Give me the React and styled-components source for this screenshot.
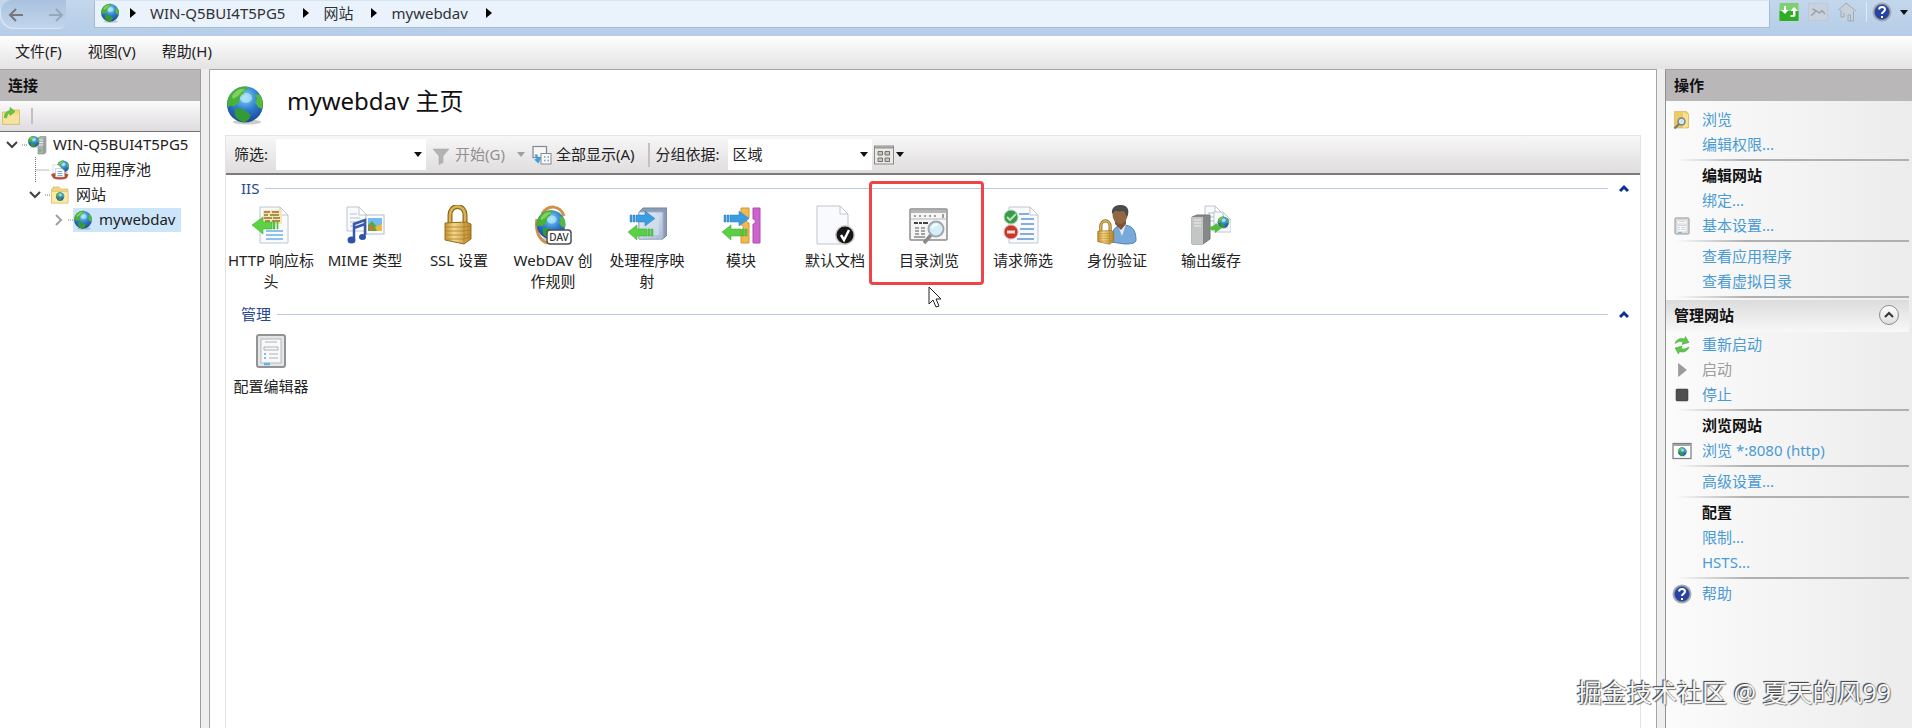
import { Fragment } from "react";
import styled, { createGlobalStyle } from "styled-components";

const connections = [
  { label: "WIN-Q5BUI4T5PG5", level: 0, state: "open", icon: "server" },
  { label: "应用程序池", level: 1, state: "leaf", icon: "pool" },
  { label: "网站", level: 1, state: "open", icon: "sites" },
  { label: "mywebdav", level: 2, state: "closed", icon: "globe", selected: true },
];

const groups = [
  {
    title: "IIS",
    features: [
      { label: "HTTP 响应标头", icon: "headers" },
      { label: "MIME 类型", icon: "mime" },
      { label: "SSL 设置", icon: "lock" },
      { label: "WebDAV 创作规则", icon: "webdav" },
      { label: "处理程序映射", icon: "handlers" },
      { label: "模块", icon: "modules" },
      { label: "默认文档", icon: "defaultDoc" },
      { label: "目录浏览", icon: "directory", marked: true },
      { label: "请求筛选", icon: "filtering" },
      { label: "身份验证", icon: "auth" },
      { label: "输出缓存", icon: "cache" },
    ],
  },
  { title: "管理", features: [{ label: "配置编辑器", icon: "config" }] },
];

const siteActions = [
  [
    { label: "浏览", icon: "explore" },
    { label: "编辑权限..." },
  ],
  [
    { label: "编辑网站", heading: true },
    { label: "绑定..." },
    { label: "基本设置...", icon: "config" },
  ],
  [{ label: "查看应用程序" }, { label: "查看虚拟目录" }],
];

const manageActions = [
  [
    { label: "重新启动", icon: "restart" },
    { label: "启动", icon: "play", disabled: true },
    { label: "停止", icon: "stop" },
  ],
  [
    { label: "浏览网站", heading: true },
    { label: "浏览 *:8080 (http)", icon: "browseSite" },
  ],
  [{ label: "高级设置..." }],
  [
    { label: "配置", heading: true },
    { label: "限制..." },
    { label: "HSTS..." },
  ],
  [{ label: "帮助", icon: "help" }],
];

const Globe = () => (
  <>
    <ellipse cx="22" cy="37" rx="14" ry="2.500" fill="#9a9a9a" opacity="0.5" />
    <circle cx="20" cy="19.500" r="18" fill="url(#ocean)" />
    <path
      d="M3 14C6 6 12 2 20 1.500c3 0 4 1 2 3l-4 2 2 3-5 3-1 5-5 4-4-1-2 2c-1-3-1-6 0-8.500Z"
      fill="#49b03a"
    />
    <path d="M30 9l5 1c3 4 3.500 9 2 14l-4-2-3-5 2-3-2-5Z" fill="#56b83c" />
    <path d="M10 24l5-1 7 4 4 3-2 4-4 3.500c-5-1-9-4-10-7Z" fill="#369a34" />
    <path d="M7 11c3-5 8-8 13-7l-3 3-4 4-5 3Z" fill="#9be070" opacity="0.7" />
    <ellipse cx="21" cy="13" rx="6" ry="5" fill="#c6f1ff" opacity="0.6" />
  </>
);

const Page = ({ x = 9, y = 2, w = 28, h = 36 }) => (
  <path
    d={`M${x} ${y}h${w - 8}l8 8v${h - 8}h-${w}Zm${w - 8} 0v8h8`}
    fill="#f8fafd"
    stroke="#bfc5cf"
  />
);

const Padlock = () => (
  <>
    <path
      d="M11 20V10a7 8 0 0 1 15 0v10"
      fill="none"
      stroke="#8f6a1c"
      strokeWidth="5"
    />
    <path
      d="M11 20V10a7 8 0 0 1 15 0v10"
      fill="none"
      stroke="#dcb257"
      strokeWidth="2.500"
    />
    <path
      d="M6 18l21-1 5 2v15l-7 5-19-4Z"
      fill="url(#brass)"
      stroke="#966c1d"
    />
    <path
      d="M7 22h18l6-1M7 26h18l6-1M7 30h18l6-1M8 34h17l6-2M25 18v20"
      fill="none"
      stroke="#a67822"
      opacity="0.7"
    />
  </>
);

const ArrowRight = () => (
  <path
    d="M3 10h2v7H3Zm3 0h2v7H6Zm3 0h9V6l10 7.500-10 7.500v-4H9Z"
    fill="#3b9de0"
    stroke="#2b7fc0"
    strokeWidth="0.500"
  />
);

const ArrowLeft = () => (
  <path
    d="M1 27l9-7v4h10v7H10v4Zm20-3h2v7h-2Zm3 0h2v7h-2Z"
    fill="#5cd045"
    stroke="#37a42c"
    strokeWidth="0.500"
  />
);

const drawings = {
  globe: <Globe />,
  server: (
    <>
      <path d="M22 6l4-3h12v32l-4 3H22Z" fill="#a9b1ae" stroke="#727b79" />
      <path d="M23 10h10M23 15h10M23 20h10" stroke="#eef2f1" strokeWidth="2" />
      <path d="M34 7v30" stroke="#666" />
      <rect x="24" y="29" width="5" height="4" fill="#58bd59" />
      <g transform="translate(1 1) scale(0.620)">
        <Globe />
      </g>
    </>
  ),
  pool: (
    <>
      <g transform="translate(13 0) scale(0.660)">
        <Globe />
      </g>
      <path d="M6 10h11l5 5v13H6Z" fill="#fff" stroke="#b4bac4" />
      <path d="M2 29c4-5 31-5 35 0l-3 7c-6 4-22 4-28 0Z" fill="#b94e32" />
      <path d="M11 17h13l5 5v12H11Z" fill="#fff" stroke="#a1a9b7" />
      <path d="M15 23h9M15 27h10M15 31h10" stroke="#75aee0" strokeWidth="2" />
    </>
  ),
  sites: (
    <>
      <path
        d="M3 8h3V4h12l3 4h15v28H3Z"
        fill="#f1d681"
        stroke="#c4a248"
      />
      <path d="M3 13h33v23H3Z" fill="#fbe9a7" stroke="#d4b55d" />
      <g transform="translate(11 14) scale(0.460)">
        <Globe />
      </g>
    </>
  ),
  connect: (
    <>
      <path d="M3 12h15l3-4h16v29H3Z" fill="#f3d984" stroke="#c7a34a" />
      <path d="M5 17h31v18H5Z" fill="#f7e3a0" />
      <path
        d="M7 23c0-9 5-13 11-14V3l10 8-10 8v-5c-4 1-6 4-7 10Z"
        fill="#65ca3e"
        stroke="#3b9a27"
      />
    </>
  ),
  headers: (
    <>
      <Page />
      <path d="M12 5h19v14H12Z" fill="#f8e7ac" />
      <path
        d="M13 7h6m2 0h7M13 10h4m2 0h9M13 13h8m1 0h7M14 16h5m2 0h8"
        stroke="#8d7340"
        strokeWidth="1.500"
      />
      <path d="M15 26h17M15 30h17M15 34h17" stroke="#6eaee0" strokeWidth="1.500" />
      <path
        d="M1 20l11-8v5h9v7h-9v5Zm21-3h2v7h-2Zm4 0h1v7h-1Z"
        fill="#5fd145"
        stroke="#37a42c"
        strokeWidth="0.500"
      />
    </>
  ),
  mime: (
    <>
      <Page x={2} y={2} w={20} h={24} />
      <path d="M5 9h7M5 13h10M5 17h8M5 21h6" stroke="#b5bfd0" />
      <rect x="21" y="10" width="18" height="19" fill="#fff" stroke="#b1bccb" />
      <rect x="23" y="13" width="14" height="13" fill="#74bcf0" />
      <path d="M23 26v-6l4-4 6 7 4-2v5Z" fill="#4cb040" />
      <path d="M30 22l7-3v7h-5Z" fill="#edba3e" />
      <path d="M25 18l5 7h-6Z" fill="#d56d3c" />
      <path
        d="M9 33V19l11-4v15M9 23l11-4"
        fill="none"
        stroke="#3859ae"
        strokeWidth="2.500"
      />
      <ellipse cx="6.500" cy="35" rx="4" ry="3.500" fill="#2f52a8" />
      <ellipse cx="17.500" cy="32" rx="3.500" ry="3" fill="#2f52a8" />
    </>
  ),
  lock: <Padlock />,
  webdav: (
    <>
      <path
        d="M9 9C15-1 27 0 31 11M4 14c-2 12 2 21 10 24"
        fill="none"
        stroke="#cf9145"
        strokeWidth="3"
      />
      <g transform="translate(2 4) scale(0.800)">
        <Globe />
      </g>
      <rect
        x="14"
        y="25"
        width="24"
        height="14"
        rx="3"
        fill="#fff"
        stroke="#4a515a"
        strokeWidth="1.500"
      />
      <text
        x="26"
        y="36"
        textAnchor="middle"
        fontSize="10"
        fontWeight="500"
        fill="#333"
      >
        DAV
      </text>
    </>
  ),
  handlers: (
    <>
      <path d="M12 7l4-4h24v27l-4 4H12Z" fill="#8a9cb8" stroke="#73839b" />
      <path d="M12 7h24v27H12Z" fill="url(#panel)" stroke="#a5b2c6" />
      <path d="M18 10h14v20H18Z" fill="#d3dff0" opacity="0.7" />
      <ArrowRight />
      <ArrowLeft />
    </>
  ),
  modules: (
    <>
      <path
        d="M20 3h8v10c-3 0-3 5 0 5v20h-8V25c3 0 3-5 0-5Z"
        fill="#f1b952"
        stroke="#cf9637"
      />
      <path d="M32 3h7v35h-7V19c3 0 3-5 0-5Z" fill="#ce63cf" stroke="#aa4cad" />
      <ArrowRight />
      <ArrowLeft />
    </>
  ),
  defaultDoc: (
    <>
      <Page x={2} y={1} w={31} h={38} />
      <circle cx="30" cy="30" r="10" fill="#ccc" />
      <circle cx="30" cy="30" r="8.500" fill="#161616" />
      <path
        d="M26 30l3 5 5-10"
        fill="none"
        stroke="#fff"
        strokeWidth="2.500"
      />
    </>
  ),
  directory: (
    <>
      <rect
        x="1"
        y="4"
        width="37"
        height="31"
        rx="1"
        fill="#f6f6f6"
        stroke="#8c8c8c"
        strokeWidth="1.500"
      />
      <path d="M2 5h35v3H2Z" fill="#b5b5b5" />
      <path
        d="M5 11h2m3 0h2m3 0h2m3 0h2m3 0h2M34 9v4"
        stroke="#a0a0a0"
        strokeWidth="2"
      />
      <path d="M2 14h35" stroke="#b7b7b7" />
      <path
        d="M5 18h4m1 0h3m1 0h5"
        stroke="#444"
        strokeWidth="2"
      />
      <path
        d="M6 23h4m2 0h4M6 26h4m2 0h4M6 29h4m2 0h4M5 32h11"
        stroke="#888"
        strokeWidth="1.500"
      />
      <path d="M22 30l-7 8" stroke="#8b8b8b" strokeWidth="3.500" />
      <circle
        cx="27"
        cy="24"
        r="7.500"
        fill="#d4eefa"
        stroke="#a0a7ae"
        strokeWidth="2"
      />
      <path d="M23 23c1-3 4-4 6-3" stroke="#fff" strokeWidth="2" fill="none" />
    </>
  ),
  filtering: (
    <>
      <Page x={6} y={2} w={29} h={36} />
      <path
        d="M16 9h10M18 14h13M18 19h13M17 24h14M17 29h14M14 34h17"
        stroke="#5f94d4"
        strokeWidth="1.500"
      />
      <circle cx="8" cy="12" r="7" fill="#3b9a4a" stroke="#b4d9b9" />
      <path d="M4 12l3 3 6-6" fill="none" stroke="#b5e5bb" strokeWidth="2" />
      <circle cx="8" cy="27" r="7" fill="#c8382a" stroke="#e3aea7" />
      <path d="M4 27h8" stroke="#f7dcd8" strokeWidth="3" />
    </>
  ),
  auth: (
    <>
      <path
        d="M14 37c0-12 5-17 12-17 8 0 13 4 13 15 0 3-4 4-11 4Z"
        fill="#78a9da"
        stroke="#4e84ba"
      />
      <path d="M20 18l5 13 4-12Z" fill="#e3edf7" />
      <path d="M18 14h11v5l-5 6-6-6Z" fill="#7e5435" />
      <ellipse cx="23" cy="10" rx="7.500" ry="9" fill="#926743" />
      <path d="M15 9C14 1 20 0 24 0c7 0 9 6 6 12l-3-6c-5 1-8 0-9 0Z" fill="#4b4b4b" />
      <g transform="translate(-3 15) scale(0.620)">
        <Padlock />
      </g>
    </>
  ),
  cache: (
    <>
      <Page x={14} y={1} w={18} h={24} />
      <path d="M17 8h7M17 12h11M17 16h11" stroke="#a9bbd3" />
      <Page x={23} y={7} w={17} h={20} />
      <g transform="translate(26 11) scale(0.320)">
        <Globe />
      </g>
      <path d="M1 12l5-2h13v24l-7 5H1Z" fill="#858988" stroke="#777" />
      <path d="M1 12h11v27H1Z" fill="#c3c6c5" />
      <path d="M3 15h7M3 18h7M3 21h7" stroke="#eee" />
      <path d="M18 21c3 1 5 0 7-3l6 5-7 5v-3c-3 1-5 0-6-4Z" fill="#54bb3e" />
    </>
  ),
  config: (
    <>
      <rect
        x="6"
        y="4"
        width="28"
        height="32"
        rx="2"
        fill="#e4e5e6"
        stroke="#929395"
        strokeWidth="2"
      />
      <rect x="10" y="8" width="20" height="24" fill="#f9f9f9" stroke="#b6b8ba" />
      <path
        d="M14 11h12M13 16h14v3H13ZM18 23h9M18 27h9"
        fill="none"
        stroke="#aeb1b5"
      />
      <path d="M13 23h2M13 27h2" stroke="#54a9dc" strokeWidth="1.500" />
      <path d="M13 33h6" stroke="#59b9ed" strokeWidth="2.500" />
    </>
  ),
  explore: (
    <>
      <path d="M5 3h24l4 5v28H5Z" fill="#eccb64" stroke="#c9a03a" />
      <path d="M22 4l10 5v25l-10 2Z" fill="#f8e38f" />
      <circle
        cx="19"
        cy="23"
        r="7"
        fill="#d3e6f3"
        stroke="#7f838a"
        strokeWidth="3"
      />
      <path d="M14 28l-9 9" stroke="#737477" strokeWidth="4" />
    </>
  ),
  restart: (
    <>
      <path
        d="M6 17C9 8 17 5 25 8l2-5 7 12-14 4 2-5c-5-2-9-1-16 3Z"
        fill="#5fc74a"
        stroke="#3ba233"
      />
      <path
        d="M34 24c-3 9-11 12-19 9l-2 5-7-12 14-4-2 5c5 2 9 1 16-3Z"
        fill="#5fc74a"
        stroke="#3ba233"
      />
    </>
  ),
  play: <path d="M13 7l16 13-16 13Z" fill="#9b9b9b" stroke="#858585" />,
  stop: (
    <rect x="8" y="8" width="24" height="24" rx="2" fill="#505050" stroke="#333" />
  ),
  browseSite: (
    <>
      <rect
        x="2"
        y="5"
        width="36"
        height="30"
        fill="#fff"
        stroke="#7d8084"
        strokeWidth="2.500"
      />
      <path d="M3 8h34" stroke="#a0a3a8" strokeWidth="4" />
      <g transform="translate(11 12) scale(0.480)">
        <Globe />
      </g>
    </>
  ),
  help: (
    <>
      <circle cx="20" cy="20" r="19" fill="#a7a9ad" />
      <circle cx="20" cy="20" r="15" fill="#2744a3" stroke="#5d6ba5" />
      <path
        d="M14 15c1-7 12-6 12 0 0 4-6 5-6 9M20 28v4"
        fill="none"
        stroke="#fff"
        strokeWidth="4"
      />
    </>
  ),
  refresh: (
    <>
      <rect x="1" y="2" width="38" height="36" rx="2" fill="#7fd071" />
      <rect x="1" y="18" width="38" height="20" fill="#2fae22" />
      <path
        d="M10 8h4v8h5l-7 8-8-8h6Zm13 22v-4h5v-8h-5l7-8 8 8h-5v8c0 3-2 4-5 4Z"
        fill="#fff"
      />
    </>
  ),
  cancel: (
    <>
      <rect x="1" y="3" width="38" height="34" fill="#c9d2dc" stroke="#b4bfca" />
      <path
        d="M6 27c4-1 7-8 11-9l6 4 5-5 6 7M9 14l8 4"
        fill="none"
        stroke="#99a2ac"
        strokeWidth="3"
      />
    </>
  ),
  home: (
    <>
      <path d="M2 17L18 2l20 16h-5v20H22V27l-5-3v12H8V17Z" fill="#c8d1da" />
      <path
        d="M2 17L18 2l20 16M33 18v20H22V26h5v12M8 16v14h6v-8"
        fill="none"
        stroke="#9da9b5"
        strokeWidth="2"
      />
    </>
  ),
  funnel: (
    <path
      d="M4 8h32L24 22v13l-8 4V22Z"
      fill="#b3b3b3"
      stroke="#a3a3a3"
    />
  ),
  showAll: (
    <>
      <rect
        x="2"
        y="3"
        width="27"
        height="22"
        fill="#f5f7f9"
        stroke="#858b92"
        strokeWidth="2.500"
      />
      <rect
        x="18"
        y="17"
        width="20"
        height="21"
        fill="#f8f8f8"
        stroke="#858b92"
        strokeWidth="2"
      />
      <path
        d="M24 24h3m4 0h3M24 31h3m4 0h3"
        stroke="#7b9cbd"
        strokeWidth="3"
      />
      <path d="M5 19h6l1 7h6l-5 11-9-8 5-1Z" fill="#3e9ee0" />
    </>
  ),
  views: (
    <>
      <rect
        x="1"
        y="2"
        width="38"
        height="36"
        fill="#e9e9e6"
        stroke="#8b8b87"
        strokeWidth="2"
      />
      <path d="M2 5h36" stroke="#9a9a98" strokeWidth="4" />
      <path
        d="M8 13h9v7H8Zm14 0h9v7h-9ZM8 26h9v7H8Zm14 0h9v7h-9Z"
        fill="#c9c6bd"
        stroke="#77736c"
        strokeWidth="2"
      />
    </>
  ),
};

function Icon({ name, size = 20 }) {
  return (
    <Drawing width={size} height={size} viewBox="0 0 40 40" aria-hidden="true">
      {drawings[name]}
    </Drawing>
  );
}

function Caret({ color = "#111" }) {
  return (
    <Drawing width="8" height="5" viewBox="0 0 8 5" aria-hidden="true">
      <path d="M0 0h8L4 5Z" fill={color} />
    </Drawing>
  );
}

function CrumbArrow() {
  return (
    <Drawing width="6" height="10" viewBox="0 0 6 10" aria-hidden="true">
      <path d="M0 0l6 5-6 5Z" fill="#000" />
    </Drawing>
  );
}

function Chevron({ size = 10, color = "#0b2f93", width = 3 }) {
  return (
    <Drawing width={size} height={size} viewBox="0 0 10 10" aria-hidden="true">
      <path d="M1 7l4-4 4 4" fill="none" stroke={color} strokeWidth={width} />
    </Drawing>
  );
}

function TreeLines({ state }) {
  return (
    <Drawing width="27" height="25" viewBox="0 0 27 25" aria-hidden="true">
      {state === "leaf" && (
        <path
          d="M12.500 0v25M12.500 13h14"
          fill="none"
          stroke="#777"
          strokeDasharray="1 1"
        />
      )}
      {state !== "leaf" && (
        <path d="M22 13h5" stroke="#777" strokeDasharray="1 1" />
      )}
      {state === "open" && (
        <path d="M7 10l5 5 5-5" fill="none" stroke="#3f3f3f" strokeWidth="2" />
      )}
      {state === "closed" && (
        <path d="M10 8l5 5-5 5" fill="none" stroke="#a0a0a0" strokeWidth="2" />
      )}
    </Drawing>
  );
}

function ActionList({ sections }) {
  return sections.map((rows, index) => (
    <Fragment key={index}>
      {index > 0 && <Divider />}
      {rows.map((row) => (
        <ActionRow key={row.label}>
          <ActionIcon>{row.icon && <Icon name={row.icon} />}</ActionIcon>
          {row.heading ? (
            <ActionHeading>{row.label}</ActionHeading>
          ) : row.disabled ? (
            <DisabledAction>{row.label}</DisabledAction>
          ) : (
            <ActionLink href="#">{row.label}</ActionLink>
          )}
        </ActionRow>
      ))}
    </Fragment>
  ));
}

export default function App() {
  return (
    <Window>
      <GlobalStyle />
      <Defs aria-hidden="true">
        <defs>
          <radialGradient id="ocean" cx="0.500" cy="0.300" r="0.700">
            <stop offset="0" stopColor="#8ad6f7" />
            <stop offset="0.500" stopColor="#2f7fd2" />
            <stop offset="1" stopColor="#1b4796" />
          </radialGradient>
          <linearGradient id="brass">
            <stop offset="0" stopColor="#c69233" />
            <stop offset="0.350" stopColor="#f3d787" />
            <stop offset="1" stopColor="#b98327" />
          </linearGradient>
          <linearGradient id="panel" x2="1" y2="1">
            <stop offset="0" stopColor="#eef4fb" />
            <stop offset="1" stopColor="#a6bad6" />
          </linearGradient>
        </defs>
      </Defs>

      <AddressRow>
        <History>
          <NavButton aria-label="后退">
            <Drawing width="16" height="14" viewBox="0 0 16 14">
              <path
                d="M15 7H2M8 1L2 7l6 6"
                fill="none"
                stroke="#77787a"
                strokeWidth="2"
              />
            </Drawing>
          </NavButton>
          <NavButton aria-label="前进">
            <Drawing width="16" height="14" viewBox="0 0 16 14">
              <path
                d="M1 7h13M8 1l6 6-6 6"
                fill="none"
                stroke="#98a8bb"
                strokeWidth="2"
              />
            </Drawing>
          </NavButton>
        </History>
        <Address aria-label="路径">
          <Icon name="globe" />
          <CrumbArrow />
          <Crumb href="#">WIN-Q5BUI4T5PG5</Crumb>
          <CrumbArrow />
          <Crumb href="#">网站</Crumb>
          <CrumbArrow />
          <Crumb href="#">mywebdav</Crumb>
          <CrumbArrow />
        </Address>
        <AddressTools>
          <PlainButton aria-label="刷新">
            <Icon name="refresh" />
          </PlainButton>
          <PlainButton aria-label="取消">
            <Icon name="cancel" />
          </PlainButton>
          <PlainButton aria-label="主页">
            <Icon name="home" />
          </PlainButton>
          <HelpButton aria-label="帮助选项">
            <Icon name="help" />
            <Caret />
          </HelpButton>
        </AddressTools>
      </AddressRow>

      <MenuBar>
        <MenuButton>文件(F)</MenuButton>
        <MenuButton>视图(V)</MenuButton>
        <MenuButton>帮助(H)</MenuButton>
      </MenuBar>

      <Body>
        <Connections>
          <PanelTitle>连接</PanelTitle>
          <ConnectionTools>
            <PlainButton aria-label="创建新连接">
              <Icon name="connect" />
            </PlainButton>
            <ToolSeparator $height={16} />
          </ConnectionTools>
          <Tree>
            {connections.map((node) => (
              <TreeRow key={node.label} $level={node.level}>
                <TreeLines state={node.state} />
                <TreeLabel href="#" $selected={node.selected}>
                  <Icon name={node.icon} />
                  {node.label}
                </TreeLabel>
              </TreeRow>
            ))}
          </Tree>
        </Connections>

        <Workspace>
          <WorkspaceHeader>
            <Icon name="globe" size={40} />
            <Title>mywebdav 主页</Title>
          </WorkspaceHeader>
          <FeatureView>
            <FilterBar>
              <FilterLabel htmlFor="filter">筛选:</FilterLabel>
              <Field $width={150}>
                <TextBox id="filter" type="text" />
                <Caret />
              </Field>
              <ToolButton disabled>
                <Icon name="funnel" />
                开始(G)
              </ToolButton>
              <CaretButton aria-label="筛选方式" disabled>
                <Caret color="#a0a0a0" />
              </CaretButton>
              <ToolButton>
                <Icon name="showAll" />
                全部显示(A)
              </ToolButton>
              <GroupSeparator $height={24} />
              <FilterLabel htmlFor="grouping">分组依据:</FilterLabel>
              <Field $width={144}>
                <Select id="grouping" defaultValue="area">
                  <option value="area">区域</option>
                </Select>
                <Caret />
              </Field>
              <ViewButton aria-label="视图">
                <Icon name="views" />
                <Caret />
              </ViewButton>
            </FilterBar>
            {groups.map((group) => (
              <FeatureGroup key={group.title}>
                <GroupHeader>
                  <GroupTitle>{group.title}</GroupTitle>
                  <GroupLine />
                  <PlainButton aria-label={`折叠 ${group.title}`}>
                    <Chevron />
                  </PlainButton>
                </GroupHeader>
                <FeatureGrid>
                  {group.features.map((feature) => (
                    <Feature key={feature.label}>
                      <Icon name={feature.icon} size={40} />
                      <FeatureName>{feature.label}</FeatureName>
                      {feature.marked && (
                        <>
                          <Highlight />
                          <Pointer
                            width="13"
                            height="22"
                            viewBox="0 0 13 22"
                            aria-hidden="true"
                          >
                            <path
                              d="M1 1v17l4-4 3 7 3-1-3-7h5Z"
                              fill="#fff"
                              stroke="#222"
                            />
                          </Pointer>
                        </>
                      )}
                    </Feature>
                  ))}
                </FeatureGrid>
              </FeatureGroup>
            ))}
          </FeatureView>
        </Workspace>

        <Actions>
          <PanelTitle>操作</PanelTitle>
          <ActionBody>
            <ActionList sections={siteActions} />
            <Divider />
            <SectionBar>
              <SectionTitle>管理网站</SectionTitle>
              <RoundButton aria-label="折叠 管理网站">
                <Chevron color="#333" width={2} />
              </RoundButton>
            </SectionBar>
            <ActionList sections={manageActions} />
          </ActionBody>
        </Actions>
      </Body>
      <Credit>掘金技术社区 @ 夏天的风99</Credit>
    </Window>
  );
}

const GlobalStyle = createGlobalStyle`
  * {
    box-sizing: border-box;
  }

  body {
    margin: 0;
    background-color: #e9e8e9;
  }

  body, button, input, select {
    font-family: "Noto Sans", "Noto Sans CJK SC", sans-serif;
    font-size: 15px;
    line-height: 21px;
    color: #222222;
  }
`;

const Drawing = styled.svg`
  display: block;
  flex: none;
`;

const Defs = styled.svg`
  position: absolute;
  width: 0;
  height: 0;
`;

const Window = styled.div`
  position: relative;
  display: flex;
  flex-direction: column;
  height: 100vh;
  min-height: 640px;
  overflow: hidden;
`;

const AddressRow = styled.header`
  display: flex;
  flex: none;
  align-items: flex-start;
  height: 36px;
  background: linear-gradient(#c3d7ec, #b5cde8);
`;

const History = styled.div`
  display: flex;
  align-items: center;
  justify-content: space-between;
  width: 66px;
  height: 29px;
  margin-right: 28px;
  padding: 0 2px 0 8px;
  border-radius: 12px 0 8px 14px;
  background: linear-gradient(#a9c2df, #c2d6ec);
  box-shadow: inset 1px -1px 1px #dce9f6;
`;

const PlainButton = styled.button`
  display: flex;
  align-items: center;
  flex: none;
  padding: 0;
  border: none;
  background: none;
`;

const NavButton = styled(PlainButton)`
  height: 29px;
`;

const Address = styled.nav`
  display: flex;
  flex: 1;
  align-items: center;
  gap: 10px;
  height: 28px;
  padding: 0 5px 2px;
  border: 1px solid #a3bbd5;
  border-top-color: #d8e5f3;
  background-color: #eaf2fb;
`;

const Crumb = styled.a`
  margin: 0 8px 0 4px;
  color: #2f3338;
  text-decoration: none;
`;

const AddressTools = styled.div`
  display: flex;
  align-items: center;
  gap: 9px;
  height: 24px;
  padding: 0 4px 0 9px;
`;

const HelpButton = styled(PlainButton)`
  gap: 8px;
  padding-left: 5px;
  border-left: 1px solid #e0ebf6;
`;

const MenuBar = styled.nav`
  display: flex;
  flex: none;
  align-items: center;
  gap: 26px;
  height: 33px;
  padding: 0 15px 2px;
  background: linear-gradient(#ffffff, #e4e2e3);
`;

const MenuButton = styled(PlainButton)`
  height: 24px;
`;

const Body = styled.div`
  display: flex;
  flex: 1;
  gap: 8px;
  min-height: 0;
  background-color: #f0eff0;
`;

const Connections = styled.aside`
  display: flex;
  flex-direction: column;
  width: 201px;
  border-top: 1px solid #a7a5a6;
  border-right: 1px solid #9d9b9c;
  background-color: #ffffff;
`;

const PanelTitle = styled.h2`
  flex: none;
  margin: 0;
  padding: 0 8px 1px;
  font-size: 15px;
  line-height: 30px;
  font-weight: 700;
  color: #111111;
  background-color: #b9b7b8;
`;

const ConnectionTools = styled.div`
  display: flex;
  align-items: center;
  gap: 10px;
  height: 31px;
  padding: 0 1px;
  border-bottom: 1px solid #737173;
  background: linear-gradient(#fbfafb, #dedcde);
`;

const ToolSeparator = styled.span`
  width: 2px;
  height: ${(props) => props.$height}px;
  background-color: #c3c1c3;
`;

const Tree = styled.ul`
  margin: 0;
  padding: 0;
  list-style: none;
`;

const TreeRow = styled.li`
  display: flex;
  align-items: center;
  height: 25px;
  padding-left: ${(props) => props.$level * 23}px;
`;

const TreeLabel = styled.a`
  display: flex;
  align-items: center;
  gap: 6px;
  height: 24px;
  padding-right: 6px;
  white-space: nowrap;
  color: #222222;
  text-decoration: none;
  background-color: ${(props) => (props.$selected ? "#cde5fb" : "transparent")};
`;

const Workspace = styled.main`
  display: flex;
  flex-direction: column;
  flex: 1;
  min-width: 0;
  padding: 0 15px;
  border: 1px solid #a7a5a6;
  border-bottom: none;
  background-color: #ffffff;
`;

const WorkspaceHeader = styled.div`
  display: flex;
  align-items: flex-end;
  gap: 22px;
  height: 65px;
  padding-bottom: 10px;
`;

const Title = styled.h1`
  margin: 0;
  padding-bottom: 8px;
  font-size: 24px;
  line-height: 32px;
  font-weight: 400;
  color: #111111;
`;

const FeatureView = styled.section`
  flex: 1;
  border: 1px solid #e4e4e6;
  border-bottom: none;
`;

const FilterBar = styled.div`
  display: flex;
  align-items: center;
  height: 39px;
  padding: 0 8px;
  border-bottom: 2px solid #7b7a7c;
  background: linear-gradient(#f8f7f8, #dfddde);
`;

const FilterLabel = styled.label`
  flex: none;
  margin-right: 8px;
`;

const Field = styled.div`
  display: grid;
  align-items: center;
  flex: none;
  width: ${(props) => props.$width}px;
  height: 31px;
  background-color: #ffffff;

  > * {
    grid-area: 1 / 1;
  }

  > svg {
    justify-self: end;
    margin-right: 4px;
    pointer-events: none;
  }
`;

const TextBox = styled.input`
  width: 100%;
  height: 31px;
  padding: 0 6px;
  border: none;
  background: none;
`;

const Select = styled.select`
  width: 100%;
  height: 31px;
  padding: 0 5px;
  border: none;
  background: none;
  appearance: none;
`;

const ToolButton = styled(PlainButton)`
  gap: 4px;
  padding-left: 5px;

  &:disabled {
    color: #929092;
  }
`;

const CaretButton = styled(PlainButton)`
  margin: 0 2px 0 12px;
`;

const GroupSeparator = styled(ToolSeparator)`
  margin: 0 6px 0 13px;
`;

const ViewButton = styled(PlainButton)`
  gap: 2px;
  padding-left: 2px;
`;

const FeatureGroup = styled.section`
  height: 126px;
  padding-top: 3px;
`;

const GroupHeader = styled.div`
  display: flex;
  align-items: center;
  height: 21px;
  padding: 0 11px 0 15px;
`;

const GroupTitle = styled.h3`
  margin: 0 6px 0 0;
  font-size: 15px;
  line-height: 21px;
  font-weight: 400;
  color: #27478f;
`;

const GroupLine = styled.span`
  flex: 1;
  height: 1px;
  margin-right: 11px;
  background-color: #bcc7e6;
`;

const FeatureGrid = styled.div`
  display: flex;
  margin-left: -2px;
`;

const Feature = styled.div`
  position: relative;
  display: flex;
  flex-direction: column;
  align-items: center;
  gap: 5px;
  width: 94px;
  padding-top: 6px;
`;

const FeatureName = styled.span`
  width: 88px;
  text-align: center;
`;

const Highlight = styled.span`
  position: absolute;
  top: -18px;
  left: -13px;
  width: 115px;
  height: 104px;
  border: 3px solid #ee4347;
  border-radius: 4px;
`;

const Pointer = styled(Drawing)`
  position: absolute;
  top: 87px;
  left: 46px;
`;

const Actions = styled.aside`
  display: flex;
  flex-direction: column;
  width: 247px;
  border-top: 1px solid #a7a5a6;
  border-left: 1px solid #929092;
`;

const ActionBody = styled.div`
  flex: 1;
  padding-top: 6px;
  background: linear-gradient(90deg, #fbfbfb, #ececed);
`;

const ActionRow = styled.div`
  display: flex;
  align-items: center;
  gap: 10px;
  height: 25px;
  padding-left: 6px;
`;

const ActionIcon = styled.span`
  width: 20px;
`;

const ActionHeading = styled.strong`
  color: #111111;
`;

const ActionLink = styled.a`
  color: #4a9bd4;
  text-decoration: none;
`;

const DisabledAction = styled.span`
  color: #9d9d9d;
`;

const Divider = styled.div`
  height: 2px;
  margin: 2px 3px 2px 10px;
  background: linear-gradient(90deg, transparent, #b1b0b1 30%);
`;

const SectionBar = styled.div`
  display: flex;
  align-items: center;
  justify-content: space-between;
  height: 32px;
  margin-right: 3px;
  padding: 0 10px 2px 8px;
  background: linear-gradient(#dddcdd, #f8f8f8);
`;

const SectionTitle = styled.h3`
  margin: 0;
  font-size: 15px;
  line-height: 21px;
  color: #111111;
`;

const RoundButton = styled(PlainButton)`
  justify-content: center;
  width: 20px;
  height: 20px;
  border: 1px solid #8d8d8d;
  border-radius: 50%;
  background: linear-gradient(#ffffff, #dddddd);
`;

const Credit = styled.div`
  position: absolute;
  right: 21px;
  bottom: 20px;
  font-size: 25px;
  line-height: 32px;
  color: #f7f7f7;
  text-shadow: -1px -1px 1px #333333, 1px 1px 1px #777777;
`;
